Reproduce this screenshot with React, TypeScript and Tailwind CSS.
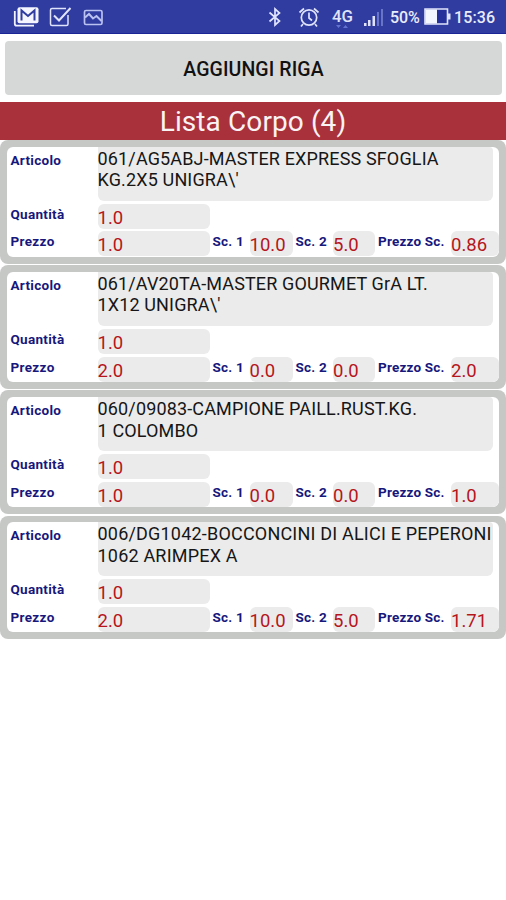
type Item = { lines: string[]; spacing: string; q: string; p: string; s1: string; s2: string; ps: string };

const items: Item[] = [
  { lines: ["061/AG5ABJ-MASTER EXPRESS SFOGLIA", "KG.2X5 UNIGRA\\'"], spacing: "tracking-[0.15px]", q: "1.0", p: "1.0", s1: "10.0", s2: "5.0", ps: "0.86" },
  { lines: ["061/AV20TA-MASTER GOURMET GrA LT.", "1X12 UNIGRA\\'"], spacing: "tracking-[0.14px]", q: "1.0", p: "2.0", s1: "0.0", s2: "0.0", ps: "2.0" },
  { lines: ["060/09083-CAMPIONE PAILL.RUST.KG.", "1 COLOMBO"], spacing: "tracking-[0.15px]", q: "1.0", p: "1.0", s1: "0.0", s2: "0.0", ps: "1.0" },
  { lines: ["006/DG1042-BOCCONCINI DI ALICI E PEPERONI", "1062 ARIMPEX A"], spacing: "tracking-[0.2px]", q: "1.0", p: "2.0", s1: "10.0", s2: "5.0", ps: "1.71" },
];

function Label({ children, className }: { children: string; className: string }) {
  return <span className={`shrink-0 whitespace-nowrap leading-[15px] font-bold text-[#17177c] ${className}`}>{children}</span>;
}

function Field({ children, className }: { children: string; className: string }) {
  return <span className={`h-[25px] shrink-0 rounded-[6px] bg-[#ebebeb] pt-[3px] text-[18.5px] leading-[22px] whitespace-nowrap text-[#b5161c] ${className}`}>{children}</span>;
}

function Card({ item }: { item: Item }) {
  return (
    <section className="h-[123.5px] rounded-[8px] bg-[#c6c8c6] px-[7px] pt-[6.7px]">
      <div className="h-[110px] overflow-hidden rounded-[6px] bg-white pl-[3.5px]">
        <div className="flex h-[57px]">
          <Label className="w-[87px] pt-[6px] text-[13.5px] tracking-[0.3px]">Articolo</Label>
          <div className="h-[54px] w-[395px] rounded-b-[6px] rounded-tr-[4px] bg-[#ebebeb] pt-[1px] text-[18px] leading-[21.5px] text-[#161616]">
            {item.lines.map((l) => <div key={l} className={`whitespace-nowrap ${item.spacing}`}>{l}</div>)}
          </div>
        </div>
        <div className="flex h-[27.7px]">
          <Label className="w-[87px] pt-[3px] text-[13.5px] tracking-[0.3px]">Quantità</Label>
          <Field className="w-[112px]">{item.q}</Field>
        </div>
        <div className="flex">
          <Label className="w-[87px] pt-[3px] text-[13.5px] tracking-[0.35px]">Prezzo</Label>
          <Field className="w-[112px]">{item.p}</Field>
          <Label className="w-[40px] pt-[3px] pl-[3px] text-[13.5px] tracking-[0.2px]">Sc. 1</Label>
          <Field className="w-[43px]">{item.s1}</Field>
          <Label className="w-[40.5px] pt-[3px] pl-[3px] text-[13.5px] tracking-[0.2px]">Sc. 2</Label>
          <Field className="w-[42px]">{item.s2}</Field>
          <Label className="w-[76px] pt-[3px] pl-[3px] text-[13.5px] tracking-[0.2px]">Prezzo Sc.</Label>
          <Field className="w-[48px]">{item.ps}</Field>
        </div>
      </div>
    </section>
  );
}

function StatusBar() {
  return (
    <header className="flex h-[34px] items-center border-b border-[#1c2596] bg-[#303c9f] text-[#e9ecfb]">
      <svg className="ml-[13px] h-[24px] w-[26px] shrink-0" viewBox="0 0 26 24" fill="none">
        <path d="M1.8 6v12.700q0 2 2 2H21" stroke="#f1f3ff" strokeWidth="1.8" />
        <rect x="4.500" y="2.200" width="21" height="16" rx="2" fill="#f4f5ff" />
        <path d="M8.500 15.500V5.500l6.500 5.500 6.500-5.500v10" stroke="#303c9f" strokeWidth="2" />
      </svg>
      <svg className="ml-[10px] h-[24px] w-[23px] shrink-0" viewBox="0 0 23 24" fill="none" stroke="#dfe3fc" strokeWidth="1.500">
        <path d="M17 3.500H3Q1.500 3.500 1.500 5v14q0 1.500 1.500 1.500h14.500q1.500 0 1.500-1.500V10" />
        <path d="m5 10.500 5 5L21.500 3" strokeWidth="2" />
      </svg>
      <svg className="ml-[11px] h-[22px] w-[20px] shrink-0" viewBox="0 0 20 22" fill="none" stroke="#b9c2f1" strokeWidth="1.700">
        <rect x="1.500" y="4.500" width="17.500" height="14" rx="1.500" />
        <path d="m2 11.500 4-3.500 4 4.500 3.500-2.500 5 5" strokeWidth="2" />
      </svg>
      <svg className="ml-auto h-[22px] w-[14px] shrink-0" viewBox="0 0 14 22" fill="none" stroke="#dfe3fc" strokeWidth="1.700">
        <path d="m1.500 6.500 10 8.500-4.500 4V3l4.500 4-10 8.500" />
      </svg>
      <svg className="ml-[16px] h-[22px] w-[22px] shrink-0" viewBox="0 0 22 22" fill="none" stroke="#dfe3fc" strokeWidth="1.700">
        <circle cx="11" cy="11.500" r="7.700" />
        <path d="M11 6.500V12l3 2.500M1.500 6.500l4.500-4M20.500 6.500l-4.500-4M5 18l-2 2.500M17 18l2 2.500" />
      </svg>
      <svg className="ml-[12px] h-[28px] w-[22px] shrink-0" viewBox="0 0 22 28">
        <text x="0" y="19" fontFamily="Roboto" fontSize="17" fontWeight="500" fill="#dfe3fc" textLength="21" lengthAdjust="spacingAndGlyphs">4G</text>
        <path d="m4 22h5l-2.500 3zM11 25h5l-2.500-3z" fill="#6573d0" />
      </svg>
      <svg className="ml-[10px] h-[20px] w-[20px] shrink-0" viewBox="0 0 20 20" fill="#dfe3fc">
        <path d="M0 16h2.500v3H0zM4 13h2.500v6H4zM8.500 9H11v10H8.500z" />
        <path d="M13 5h2v14h-2zM17 2h2v17h-2z" fill="#6874c5" />
      </svg>
      <span className="ml-[6px] w-[34px] pt-[3px] text-[16px] leading-[20px] font-medium tracking-[-0.1px] whitespace-nowrap">50%</span>
      <svg className="h-[17px] w-[27px] shrink-0" viewBox="0 0 27 17">
        <path d="M1 1h22.500v15H1z" fill="#26329a" stroke="#dfe3fc" strokeWidth="1.600" />
        <path d="M1.500 1.500h11.500v14H1.500z" fill="#f5f7ff" />
        <path d="M24 5.500h2.500v6H24z" fill="#dfe3fc" />
      </svg>
      <span className="mr-[10px] ml-[3px] w-[42px] pt-[3px] text-[16px] leading-[20px] font-medium tracking-[0.1px] whitespace-nowrap">15:36</span>
    </header>
  );
}

export default function App() {
  return (
    <main className="h-[900px] w-[506px] overflow-hidden bg-white font-['Roboto','Liberation_Sans',sans-serif]">
      <StatusBar />
      <div className="h-[68px] pt-[7px] pr-[4px] pl-[5px]">
        <button className="block h-[54px] w-full rounded-[4px] bg-[#d6d8d7] pt-[3px] text-[19.5px] font-medium tracking-[0.1px] text-[#111]">AGGIUNGI RIGA</button>
      </div>
      <h1 className="flex h-[37.5px] items-center justify-center bg-[#a8313b] pt-[3px] text-[28px] tracking-[0.1px] text-[#faf3f4]">Lista Corpo (4)</h1>
      <div className="flex flex-col gap-[1.7px] pt-[0.5px]">
        {items.map((item) => <Card key={item.lines[0]} item={item} />)}
      </div>
    </main>
  );
}
